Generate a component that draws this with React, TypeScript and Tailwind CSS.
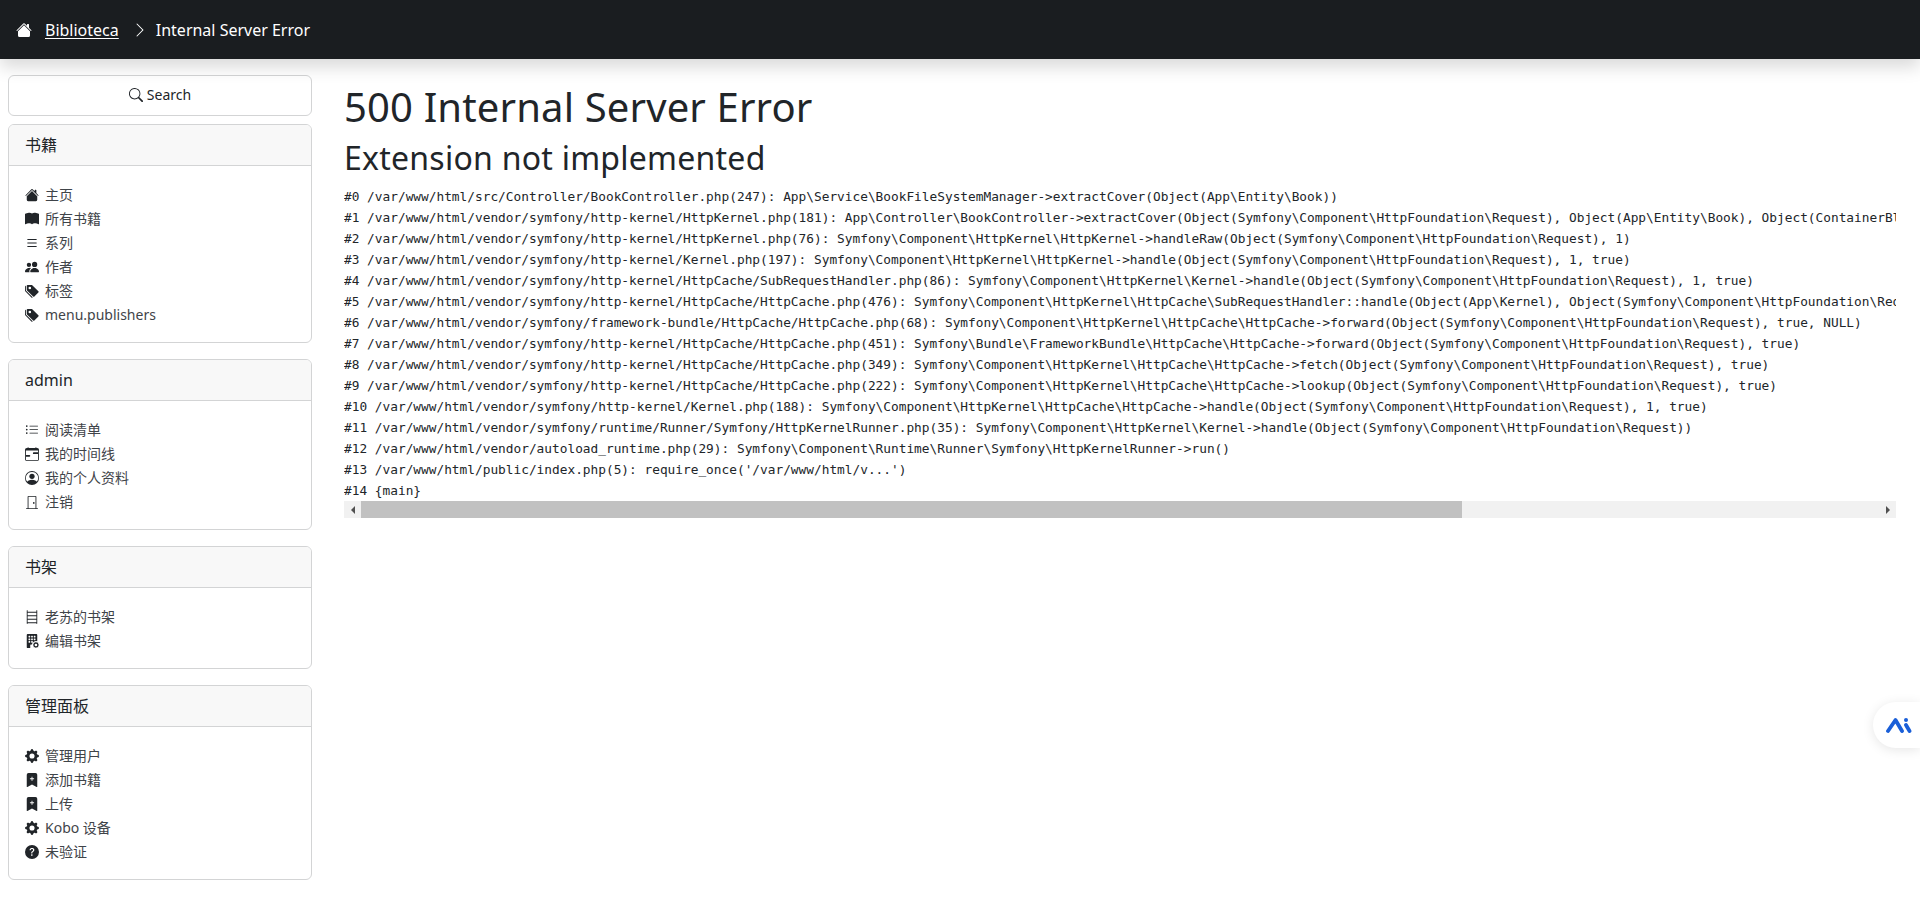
import React from "react";
import {
  BsBookFill,
  BsBookmarkPlusFill,
  BsBookshelf,
  BsBuildingFillGear,
  BsCalendarRange,
  BsChevronRight,
  BsDoorClosed,
  BsGearFill,
  BsHouseFill,
  BsList,
  BsListUl,
  BsPeopleFill,
  BsPersonCircle,
  BsQuestionCircleFill,
  BsSearch,
  BsTagsFill,
} from "react-icons/bs";
import type { IconType } from "react-icons";

const uiFont = "font-['Noto_Sans','Noto_Sans_CJK_SC',sans-serif]";

interface MenuItem {
  icon: IconType;
  label: string;
}

interface MenuCard {
  title: string;
  items: MenuItem[];
}

const cards: MenuCard[] = [
  {
    title: "书籍",
    items: [
      { icon: BsHouseFill, label: "主页" },
      { icon: BsBookFill, label: "所有书籍" },
      { icon: BsList, label: "系列" },
      { icon: BsPeopleFill, label: "作者" },
      { icon: BsTagsFill, label: "标签" },
      { icon: BsTagsFill, label: "menu.publishers" },
    ],
  },
  {
    title: "admin",
    items: [
      { icon: BsListUl, label: "阅读清单" },
      { icon: BsCalendarRange, label: "我的时间线" },
      { icon: BsPersonCircle, label: "我的个人资料" },
      { icon: BsDoorClosed, label: "注销" },
    ],
  },
  {
    title: "书架",
    items: [
      { icon: BsBookshelf, label: "老苏的书架" },
      { icon: BsBuildingFillGear, label: "编辑书架" },
    ],
  },
  {
    title: "管理面板",
    items: [
      { icon: BsGearFill, label: "管理用户" },
      { icon: BsBookmarkPlusFill, label: "添加书籍" },
      { icon: BsBookmarkPlusFill, label: "上传" },
      { icon: BsGearFill, label: "Kobo 设备" },
      { icon: BsQuestionCircleFill, label: "未验证" },
    ],
  },
];

const trace = [
  "#0 /var/www/html/src/Controller/BookController.php(247): App\\Service\\BookFileSystemManager->extractCover(Object(App\\Entity\\Book))",
  "#1 /var/www/html/vendor/symfony/http-kernel/HttpKernel.php(181): App\\Controller\\BookController->extractCover(Object(Symfony\\Component\\HttpFoundation\\Request), Object(App\\Entity\\Book), Object(ContainerBlIzwVn\\BookFileSystemManagerGhost), Object(App\\Entity\\User))",
  "#2 /var/www/html/vendor/symfony/http-kernel/HttpKernel.php(76): Symfony\\Component\\HttpKernel\\HttpKernel->handleRaw(Object(Symfony\\Component\\HttpFoundation\\Request), 1)",
  "#3 /var/www/html/vendor/symfony/http-kernel/Kernel.php(197): Symfony\\Component\\HttpKernel\\HttpKernel->handle(Object(Symfony\\Component\\HttpFoundation\\Request), 1, true)",
  "#4 /var/www/html/vendor/symfony/http-kernel/HttpCache/SubRequestHandler.php(86): Symfony\\Component\\HttpKernel\\Kernel->handle(Object(Symfony\\Component\\HttpFoundation\\Request), 1, true)",
  "#5 /var/www/html/vendor/symfony/http-kernel/HttpCache/HttpCache.php(476): Symfony\\Component\\HttpKernel\\HttpCache\\SubRequestHandler::handle(Object(App\\Kernel), Object(Symfony\\Component\\HttpFoundation\\Request), 1, true)",
  "#6 /var/www/html/vendor/symfony/framework-bundle/HttpCache/HttpCache.php(68): Symfony\\Component\\HttpKernel\\HttpCache\\HttpCache->forward(Object(Symfony\\Component\\HttpFoundation\\Request), true, NULL)",
  "#7 /var/www/html/vendor/symfony/http-kernel/HttpCache/HttpCache.php(451): Symfony\\Bundle\\FrameworkBundle\\HttpCache\\HttpCache->forward(Object(Symfony\\Component\\HttpFoundation\\Request), true)",
  "#8 /var/www/html/vendor/symfony/http-kernel/HttpCache/HttpCache.php(349): Symfony\\Component\\HttpKernel\\HttpCache\\HttpCache->fetch(Object(Symfony\\Component\\HttpFoundation\\Request), true)",
  "#9 /var/www/html/vendor/symfony/http-kernel/HttpCache/HttpCache.php(222): Symfony\\Component\\HttpKernel\\HttpCache\\HttpCache->lookup(Object(Symfony\\Component\\HttpFoundation\\Request), true)",
  "#10 /var/www/html/vendor/symfony/http-kernel/Kernel.php(188): Symfony\\Component\\HttpKernel\\HttpCache\\HttpCache->handle(Object(Symfony\\Component\\HttpFoundation\\Request), 1, true)",
  "#11 /var/www/html/vendor/symfony/runtime/Runner/Symfony/HttpKernelRunner.php(35): Symfony\\Component\\HttpKernel\\Kernel->handle(Object(Symfony\\Component\\HttpFoundation\\Request))",
  "#12 /var/www/html/vendor/autoload_runtime.php(29): Symfony\\Component\\Runtime\\Runner\\Symfony\\HttpKernelRunner->run()",
  "#13 /var/www/html/public/index.php(5): require_once('/var/www/html/v...')",
  "#14 {main}",
];

const Card: React.FC<{ card: MenuCard }> = ({ card }) => (
  <section className="overflow-hidden rounded-md border border-[#d3d4d5] bg-white">
    <h5 className="h-[41px] border-b border-[#d3d4d5] bg-[#f8f8f8] px-4 text-base leading-[40px] text-[#212529]">
      {card.title}
    </h5>
    <ul className="px-4 pt-[17px] pb-[15px]">
      {card.items.map((item) => (
        <li key={item.label} className="flex h-6 items-center text-sm text-[#3f4449]">
          <item.icon className="mr-[6px] size-[14px] shrink-0 text-[#212529]" />
          {item.label}
        </li>
      ))}
    </ul>
  </section>
);

export default function App() {
  return (
    <div className={`min-h-[919px] bg-white ${uiFont}`}>
      <header className="relative flex h-[59px] items-center bg-[#1a1d20] pl-4 text-base text-white shadow-[0_8px_16px_rgba(0,0,0,0.15)]">
        <BsHouseFill className="mr-[13px] size-4" />
        <a className="underline underline-offset-2">Biblioteca</a>
        <BsChevronRight className="mr-2 ml-[13px] size-4" />
        <span>Internal Server Error</span>
      </header>

      <div className="flex">
        <aside className="ml-2 flex w-[304px] shrink-0 flex-col pt-4">
          <button
            type="button"
            className="mb-2 flex h-[41px] items-center justify-center gap-1 rounded-md border border-[#d3d4d5] bg-white pb-[2px] text-sm text-[#212529]"
          >
            <BsSearch className="size-[14px]" />
            Search
          </button>
          <div className="flex flex-col gap-4">
            {cards.map((card) => (
              <Card key={card.title} card={card} />
            ))}
          </div>
        </aside>

        <main className="ml-2 min-w-0 flex-1 px-6 pt-6 text-[#212529]">
          <h1 className="text-[40px] leading-[48px] tracking-[0.15px]">500 Internal Server Error</h1>
          <h2 className="mt-2 mb-[9px] text-[32px] leading-[38px] tracking-[0.25px]">Extension not implemented</h2>
          <pre className="overflow-hidden font-['DejaVu_Sans_Mono',monospace] text-[12.8px] leading-[21px] text-[#212529]">
            {trace.join("\n")}
          </pre>
          <div className="flex h-[17px] items-center bg-[#f1f1f1]">
            <div className="flex w-[17px] justify-center">
              <div className="h-0 w-0 border-y-4 border-r-4 border-y-transparent border-r-[#505050]" />
            </div>
            <div className="h-[17px] w-[1101px] bg-[#c1c1c1]" />
            <div className="ml-auto flex w-[17px] justify-center">
              <div className="h-0 w-0 border-y-4 border-l-4 border-y-transparent border-l-[#505050]" />
            </div>
          </div>
        </main>
      </div>

      <div className="fixed top-[702px] right-0 flex h-[46px] w-[47px] items-center justify-center rounded-l-full bg-white pl-1 shadow-[0_2px_12px_rgba(0,0,0,0.1)]">
        <svg width="26" height="16" viewBox="0 0 26 16" fill="none">
          <path d="M2 14 L9.5 3 L16 14" stroke="#1a5fd8" strokeWidth="3.8" strokeLinecap="round" strokeLinejoin="round" />
          <circle cx="20" cy="3" r="2" fill="#1a5fd8" />
          <path d="M20 8 L23.5 14" stroke="#1a5fd8" strokeWidth="3.8" strokeLinecap="round" />
        </svg>
      </div>
    </div>
  );
}
